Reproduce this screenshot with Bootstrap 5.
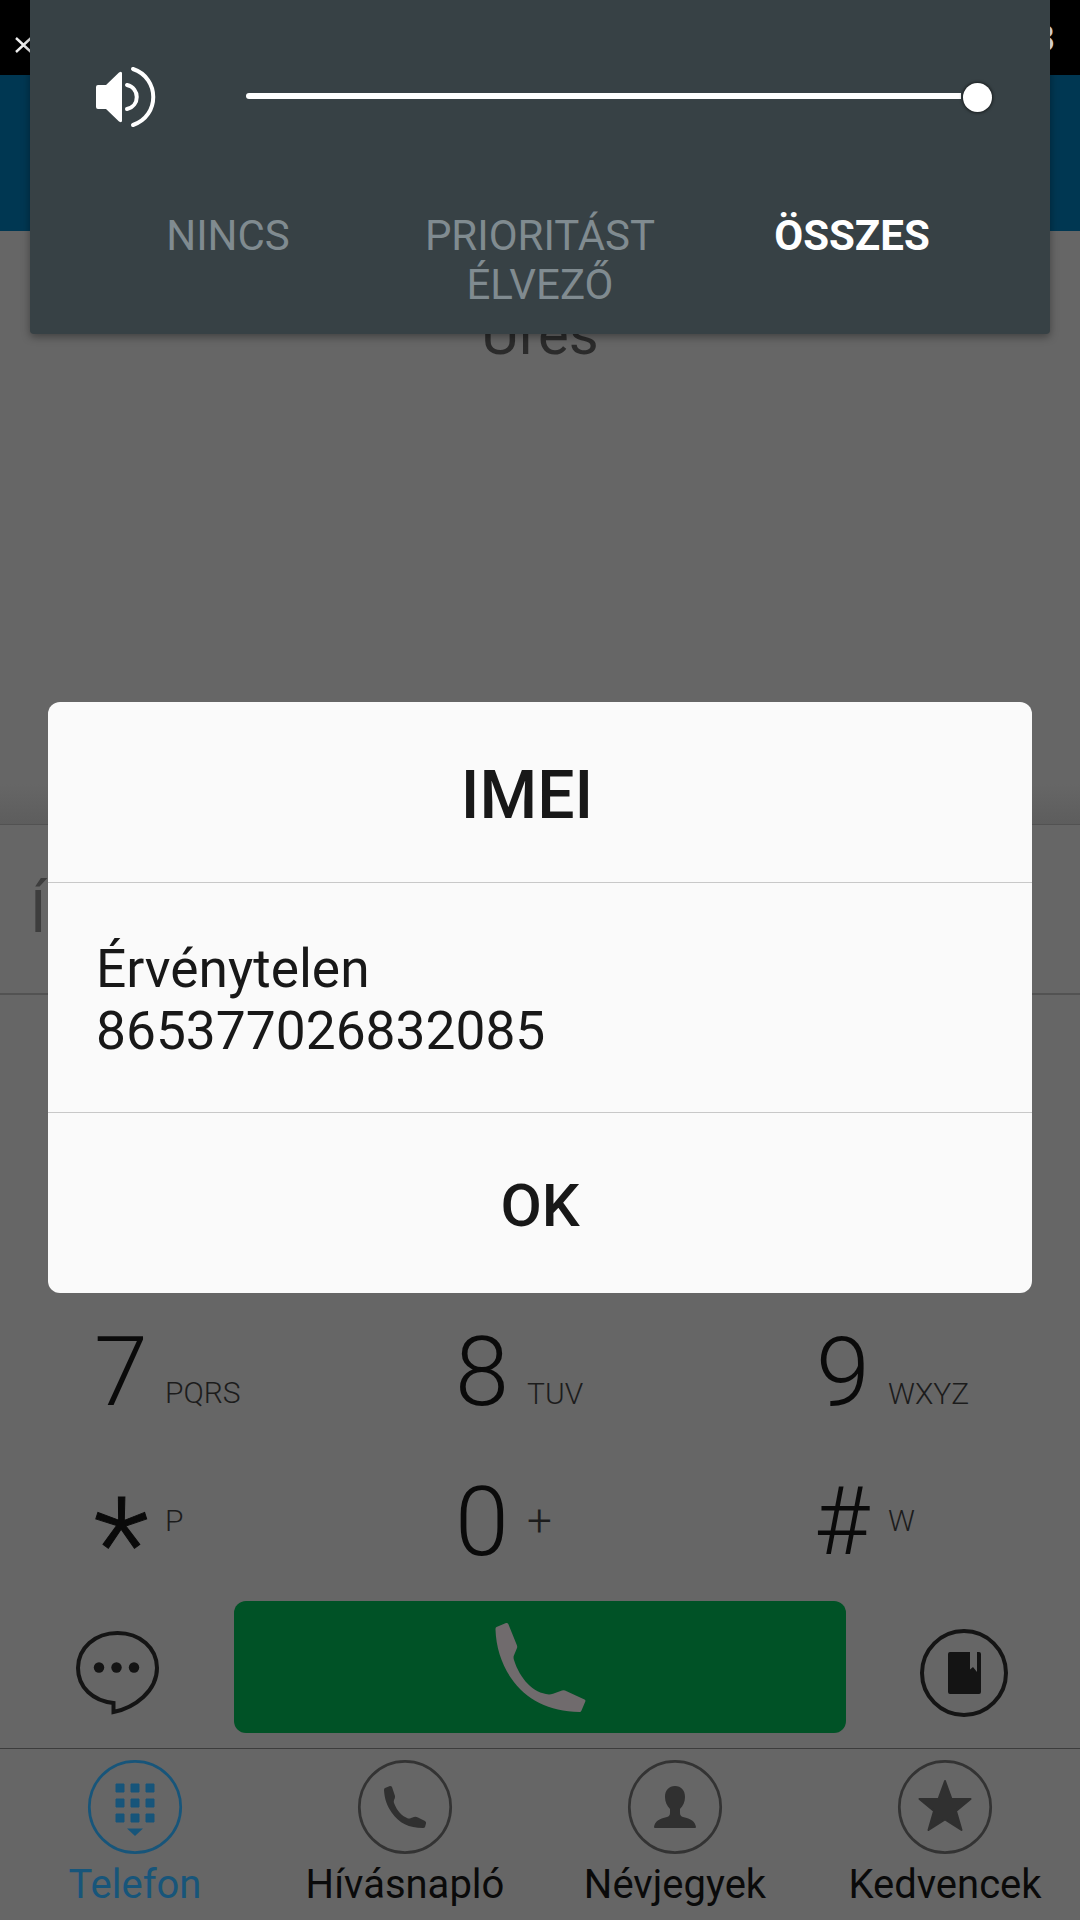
<!DOCTYPE html>
<html lang="hu">
<head>
<meta charset="utf-8">
<meta name="viewport" content="width=device-width, initial-scale=1">
<title>Telefon</title>
<link href="https://cdn.jsdelivr.net/npm/bootstrap@5.3.0/dist/css/bootstrap.min.css" rel="stylesheet">
<script src="https://cdn.jsdelivr.net/npm/bootstrap@5.3.0/dist/js/bootstrap.bundle.min.js"></script>
<style>
body{background:#666;font-family:Roboto,"Noto Sans",sans-serif;color:#0a0a0a}
.phone{width:1080px;height:1920px;background:#666}
.status{height:75px;background:#000;color:#eee}
.status svg{margin:36px 0 0 14px}
.clock{font-size:37px;line-height:42px;margin:18px 25px 0 0}
.appbar{height:156px;background:#003752}
.results{height:593px}
.empty-msg{font-size:58px;line-height:70px;padding-top:68px;color:#2b2b2b}
.field-shade{height:40px;background:linear-gradient(#666,#5d5d5d)}
.dial-field{height:171px;border-top:1px solid #525252;border-bottom:2px solid #525252;padding:52px 0 0 30px;font-size:60px;line-height:70px;color:#3d3d3d}
.keys{height:606px;padding:300px 0 0 94px}
.key-row{height:150px}
.key{width:361px;height:150px;padding-top:21px}
.num{font-size:97px;line-height:112px;font-weight:300;width:56px;height:112px}
.num.star{font-size:128px;font-weight:300;padding-top:22px;-webkit-text-stroke:1px #0a0a0a}
.num.hash{font-size:95px;text-indent:-2px}
.sub{font-size:30px;line-height:36px;font-weight:300;color:#1c1c1c;margin:59px 0 0 15px}
.key + .key .sub{margin-top:60px;margin-left:16px}
.key .sub.up,.key + .key .sub.up{margin-top:37px}
.key .sub.plus{font-size:44px}
.call-row{height:147px}
.call-btn{width:612px;height:132px;border-radius:12px;background:#005226}
.side-l{width:234px;padding-left:74px}
.side-r{width:234px;padding-left:72px}
.tabs{height:172px;border-top:1px solid #3c3c3c}
.tab{font-size:40px;line-height:48px;padding-top:10px}
.tab svg{display:block;margin-bottom:6px}
.tab.on{color:#17557a}
.vol{left:30px;top:0;width:1020px;height:334px;background:#374145;border-radius:0 0 4px 4px;box-shadow:0 3px 9px rgba(0,0,0,.36)}
.vol-row{height:211px;padding:65px 58px 0 66px}
.track{width:715px;height:6px;border-radius:3px 0 0 3px;background:#fff;margin:28px 0 0 88px}
.knob{width:29px;height:29px;border-radius:50%;background:#fff;margin:18px 0 0 2px;box-shadow:0 0 3px 1px rgba(0,0,0,.55)}
.modes{padding:0 42px;font-size:42px;line-height:49px;color:#808b90}
.modes div{width:312px}
.dlg{left:48px;top:702px;width:984px;height:591px;border-radius:12px;background:#fafafa;color:#181818}
.dlg-title{height:181px;border-bottom:1px solid #c8c8c8;font-size:66px;font-weight:500;padding-right:26px;line-height:187px}
.dlg-text{height:230px;border-bottom:1px solid #c8c8c8;font-size:53.300px;line-height:62px;padding:55px 48px 0}
.dlg-ok{font-size:60px;font-weight:500;line-height:185px;height:180px}
</style>
</head>
<body>
<div class="phone position-relative overflow-hidden">
  <header>
    <div class="status d-flex justify-content-between align-items-start">
      <svg width="20" height="18"><path d="M2 2 17 16M17 2 2 16" stroke="#eee" stroke-width="2.4"/></svg>
      <span class="clock">8</span>
    </div>
    <div class="appbar"></div>
  </header>
  <main>
    <div class="results d-flex flex-column justify-content-between">
      <div class="empty-msg text-center">Üres</div>
      <div class="field-shade"></div>
    </div>
    <div class="dial-field">Í</div>
    <div class="keys">
      <div class="key-row d-flex">
        <div class="key d-flex flex-shrink-0"><span class="num">7</span><span class="sub">PQRS</span></div>
        <div class="key d-flex flex-shrink-0"><span class="num">8</span><span class="sub">TUV</span></div>
        <div class="key d-flex"><span class="num">9</span><span class="sub">WXYZ</span></div>
      </div>
      <div class="key-row d-flex">
        <div class="key d-flex flex-shrink-0"><span class="num star">*</span><span class="sub up">P</span></div>
        <div class="key d-flex flex-shrink-0"><span class="num">0</span><span class="sub up plus">+</span></div>
        <div class="key d-flex"><span class="num hash">#</span><span class="sub up">W</span></div>
      </div>
    </div>
    <div class="call-row d-flex align-items-start">
      <div class="side-l pt-4">
        <svg class="mt-1" width="88" height="90" viewBox="74 1629 88 90"><path d="M113.500 1703C93 1701 78 1687.500 78 1668C78 1648 95 1633 117.500 1633C140 1633 157 1648 157 1668C157 1691 135 1707.500 113.500 1712Z" fill="none" stroke="#141414" stroke-width="4"/><g fill="#141414"><circle cx="99" cy="1667.500" r="5.200"/><circle cx="116.500" cy="1667.500" r="5.200"/><circle cx="134" cy="1667.500" r="5.200"/></g></svg>
      </div>
      <div class="call-btn d-flex justify-content-center pt-3">
        <svg width="120" height="115" viewBox="0 0 120 115"><path fill="#706b6d" d="M16.500 13 26 9Q27.500 8.500 28.300 10L37 31.500Q37.500 33 36.800 34.500L33.700 42Q33.300 44 34 46C40 65 53 79 69 80.500Q71 80.500 73 79.800L82 76.500Q83.500 76 85 76.500L104.500 85.500Q105.800 86.200 105.300 87.500L101.500 96.500Q101 98 99.500 98C69 97.500 46 86 31 64C21.500 50 16 33 15.500 15.500Q15.300 13.500 16.500 13Z" transform="translate(0 -3)"/></svg>
      </div>
      <div class="side-r pt-4">
        <svg class="mt-1" width="92" height="92" viewBox="918 1629 92 92"><circle cx="964" cy="1673" r="42" fill="none" stroke="#141414" stroke-width="4"/><path fill="#141414" d="M950 1652h20v17.500l3-2.500 4 5V1652h2q2 0 2 2v38q0 2-2 2h-29q-2 0-2-2v-38q0-2 2-2z"/></svg>
      </div>
    </div>
  </main>
  <nav class="tabs d-flex">
    <div class="tab on col-3 d-flex flex-column align-items-center">
      <svg width="96" height="96" viewBox="0 0 96 96"><circle cx="48" cy="48" r="45.700" fill="none" stroke="#17557a" stroke-width="2.700"/><g fill="#17557a"><path d="M29 25h8v8h-8zM44 25h8v8h-8zM59 25h8v8h-8zM29 40h8v8h-8zM44 40h8v8h-8zM59 40h8v8h-8zM29 55h8v8h-8zM44 55h8v8h-8zM59 55h8v8h-8z" stroke="#17557a" stroke-width="1" stroke-linejoin="round"/><path d="M40 69.500h16l-8 7.500z"/></g></svg>
      <span>Telefon</span>
    </div>
    <div class="tab col-3 d-flex flex-column align-items-center">
      <svg width="96" height="96" viewBox="0 0 96 96"><circle cx="48" cy="48" r="45.700" fill="none" stroke="#333" stroke-width="2.700"/><path fill="#303030" d="M28 29 33 27Q34.500 27 35 28L38 37Q38.300 39 37 41Q36.500 43 37 44C40 52 45 57 50 59Q52 60 54 59L57 58Q59 57.500 61 58.500L68 62Q69.500 63 69 64.500L68 68Q67.500 69 66 69C52 69 42 64 35 54C30 47 27.500 40 27 31Q27 29.500 28 29Z"/></svg>
      <span>Hívásnapló</span>
    </div>
    <div class="tab col-3 d-flex flex-column align-items-center">
      <svg width="96" height="96" viewBox="0 0 96 96"><circle cx="48" cy="48" r="45.700" fill="none" stroke="#333" stroke-width="2.700"/><path fill="#303030" d="M48 27C54 27 58 31 58 38C58 43 56 47 53 50V54Q53 57 56 58C64 60 68 62 69 68Q69 69 68 69H28Q27 69 27 68C28 62 32 60 40 58Q43 57 43 54V50C40 47 38 43 38 38C38 31 42 27 48 27Z"/></svg>
      <span>Névjegyek</span>
    </div>
    <div class="tab col-3 d-flex flex-column align-items-center">
      <svg width="96" height="96" viewBox="0 0 96 96"><circle cx="48" cy="48" r="45.700" fill="none" stroke="#333" stroke-width="2.700"/><path fill="#303030" stroke="#303030" stroke-width="2" stroke-linejoin="round" d="M48 22 54.500 40H73.500L59 52 64.500 71 48 60.500 31.500 71 37 52 22.500 40H41.500Z"/></svg>
      <span>Kedvencek</span>
    </div>
  </nav>

  <section class="vol position-absolute">
    <div class="vol-row d-flex align-items-start">
      <svg width="62" height="64" viewBox="96 65 62 64"><path fill="#fff" d="M98 85h8l13-12.500q3-2 3 1v47q0 3-3 1L106 109h-8q-2 0-2-2V87q0-2 2-2z"/><g fill="none" stroke="#fff" stroke-width="4" stroke-linecap="round"><path d="M127 85C140 88 140 106 127 109"/><path d="M133 69C160 78 160 116 133 125"/></g></svg>
      <div class="track flex-shrink-0"></div>
      <div class="knob flex-shrink-0"></div>
    </div>
    <div class="modes d-flex text-center">
      <div>NINCS</div>
      <div>PRIORITÁST<br>ÉLVEZŐ</div>
      <div class="fw-bold text-white">ÖSSZES</div>
    </div>
  </section>

  <section class="dlg position-absolute" role="dialog">
    <div class="dlg-title text-center">IMEI</div>
    <div class="dlg-text">Érvénytelen<br>865377026832085</div>
    <div class="dlg-ok text-center">OK</div>
  </section>
</div>
</body>
</html>
